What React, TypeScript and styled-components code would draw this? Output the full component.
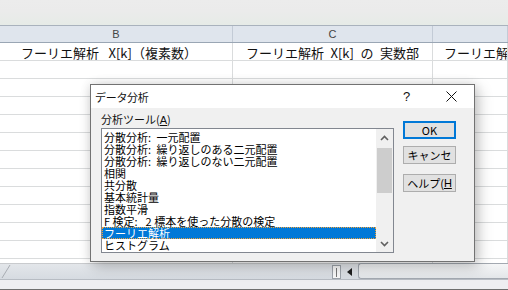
import styled, { createGlobalStyle } from "styled-components"

const GlobalStyle = createGlobalStyle`
  html, body {
    margin: 0;
    padding: 0;
  }
  body {
    width: 508px;
    height: 290px;
    overflow: hidden;
    background: #ffffff;
    font-family: "Noto Sans CJK JP", "Liberation Sans", sans-serif;
  }
`

const columns = "233px 200px 1fr"

const cellTexts = [
  "フーリエ解析\u2002 X[k]（複素数）",
  "フーリエ解析\u2002X[k]\u2002の\u2002実数部",
  "フーリエ解析\u2002X[k]\u2002の\u2002虚数部",
]

const tools = [
  "分散分析:\u2002一元配置",
  "分散分析:\u2002繰り返しのある二元配置",
  "分散分析:\u2002繰り返しのない二元配置",
  "相関",
  "共分散",
  "基本統計量",
  "指数平滑",
  "F 検定:\u2002 2 標本を使った分散の検定",
  "フーリエ解析",
  "ヒストグラム",
]

export default function App() {
  return (
    <>
      <GlobalStyle />
      <Sheet>
        <Ribbon />
        <HeaderRow>
          <HeaderCell>B</HeaderCell>
          <HeaderCell>C</HeaderCell>
          <HeaderCell />
        </HeaderRow>
        <Grid>
          <Row>
            {cellTexts.map((t) => (
              <Cell key={t}>{t}</Cell>
            ))}
          </Row>
          {Array.from({ length: 12 }).map((_, i) => (
            <Row key={i}>
              <Cell />
              <Cell />
              <Cell />
            </Row>
          ))}
        </Grid>
        <StatusArea>
          <TabStrip>
            <TabArea>
              <svg width="12" height="15" viewBox="0 0 12 15">
                <path d="M2 14 L10 1" stroke="#a9adb3" strokeWidth="1" />
              </svg>
            </TabArea>
            <SplitBox>
              <span />
            </SplitBox>
            <ScrollArrow>
              <svg width="6" height="8" viewBox="0 0 6 8">
                <path d="M5 0 L0 4 L5 8 Z" fill="#1f1f1f" />
              </svg>
            </ScrollArrow>
            <HTrack />
          </TabStrip>
          <LowerStrip />
        </StatusArea>

        <Dialog>
          <TitleBar>
            <Title>データ分析</Title>
            <TitleButton>?</TitleButton>
            <TitleButton>
              <svg width="11" height="11" viewBox="0 0 11 11">
                <path d="M0.5 0.5 L10.5 10.5 M10.5 0.5 L0.5 10.5" stroke="#111" strokeWidth="1" />
              </svg>
            </TitleButton>
          </TitleBar>
          <DialogBody>
            <ListColumn>
              <FieldLabel>
                分析ツール(<u>A</u>)
              </FieldLabel>
              <ListBox>
                <Items>
                  {tools.map((t) => (
                    <Item key={t} $selected={t === "フーリエ解析"}>
                      {t}
                    </Item>
                  ))}
                </Items>
                <VScroll>
                  <ScrollButton>
                    <svg width="9" height="6" viewBox="0 0 9 6">
                      <path d="M1 5 L4.5 1.5 L8 5" stroke="#606060" strokeWidth="1.6" fill="none" />
                    </svg>
                  </ScrollButton>
                  <Thumb />
                  <ScrollButton>
                    <svg width="9" height="6" viewBox="0 0 9 6">
                      <path d="M1 1 L4.5 4.5 L8 1" stroke="#606060" strokeWidth="1.6" fill="none" />
                    </svg>
                  </ScrollButton>
                </VScroll>
              </ListBox>
            </ListColumn>
            <ButtonColumn>
              <DialogButton $primary>OK</DialogButton>
              <DialogButton>キャンセ</DialogButton>
              <DialogButton $gap>
                ヘルプ(<u>H</u>
              </DialogButton>
            </ButtonColumn>
          </DialogBody>
        </Dialog>
      </Sheet>
    </>
  )
}

const Sheet = styled.div`
  position: relative;
  width: 508px;
  height: 290px;
  display: flex;
  flex-direction: column;
  overflow: hidden;
`

const Ribbon = styled.div`
  height: 25px;
  flex: none;
  background: linear-gradient(#ececec 0%, #ebebeb 45%, #e6ebe7 100%);
`

const HeaderRow = styled.div`
  flex: none;
  display: grid;
  grid-template-columns: ${columns};
  height: 16px;
  border-top: 1px solid #a9b2bd;
  border-bottom: 1px solid #9aa6b4;
  background: #dfe5ed;
`

const HeaderCell = styled.div`
  border-right: 1px solid #c3cbd6;
  display: flex;
  align-items: center;
  justify-content: center;
  font-family: "Liberation Sans", sans-serif;
  font-size: 11px;
  color: #444;
`

const Grid = styled.div`
  flex: 1;
  overflow: hidden;
`

const Row = styled.div`
  display: grid;
  grid-template-columns: ${columns};
  height: 17px;
  border-bottom: 1px solid #dadcdd;
`

const Cell = styled.div`
  border-right: 1px solid #dadcdd;
  display: flex;
  align-items: center;
  justify-content: center;
  white-space: nowrap;
  overflow: hidden;
  font-size: 13px;
  color: #111;
  line-height: 17px;
  padding-top: 1px;

  &:nth-child(1) {
    padding-right: 14px;
  }
  &:nth-child(3) {
    justify-content: flex-start;
    padding-left: 11px;
  }
`

const StatusArea = styled.div`
  flex: none;
  height: 26px;
  border-top: 1px solid #c9cbce;
  display: flex;
  flex-direction: column;
`

const TabStrip = styled.div`
  height: 15px;
  display: flex;
  align-items: stretch;
  background: linear-gradient(#e3e6ea, #d6dbe1);
  border-bottom: 1px solid #b7bcc3;
`

const TabArea = styled.div`
  flex: 1;
  display: flex;
  align-items: flex-end;
`

const SplitBox = styled.div`
  width: 7px;
  margin: 1px 0 0;
  background: #f8f8f8;
  border: 1px solid #9da3aa;
  display: flex;
  justify-content: center;
  align-items: center;

  span {
    width: 1px;
    height: 9px;
    background: #777;
  }
`

const ScrollArrow = styled.div`
  width: 17px;
  display: flex;
  align-items: center;
  justify-content: center;
`

const HTrack = styled.div`
  width: 149px;
  margin-top: -1px;
  border: 1px solid #a3a9b1;
  border-right: none;
  border-radius: 3px 0 0 3px;
  background: linear-gradient(#f5f6f7, #e3e6e9);
`

const LowerStrip = styled.div`
  flex: 1;
  background: #eeeef1;
  border-bottom: 1px solid #6e6e6e;
`

const Dialog = styled.div`
  position: absolute;
  left: 90px;
  top: 84px;
  width: 385px;
  height: 178px;
  box-sizing: border-box;
  border: 1px solid #727272;
  background: #f0f0f0;
  display: flex;
  flex-direction: column;
  box-shadow: 0 0 10px rgba(0, 0, 0, 0.12), 4px 5px 14px rgba(0, 0, 0, 0.2);
`

const TitleBar = styled.div`
  height: 23px;
  flex: none;
  background: #ffffff;
  display: flex;
  align-items: center;
  padding-left: 4px;
`

const Title = styled.div`
  flex: 1;
  font-size: 11px;
  color: #111;
  letter-spacing: -0.3px;
`

const TitleButton = styled.div`
  width: 45px;
  height: 23px;
  display: flex;
  align-items: center;
  justify-content: center;
  font-family: "Liberation Sans", sans-serif;
  font-size: 13px;
  color: #111;
  &:first-of-type {
    width: 40px;
  }
`

const DialogBody = styled.div`
  flex: 1;
  display: flex;
  padding: 3px 18px 8px 10px;
`

const ListColumn = styled.div`
  width: 294px;
  display: flex;
  flex-direction: column;
`

const FieldLabel = styled.div`
  height: 16px;
  margin-bottom: 1px;
  font-size: 11px;
  line-height: 16px;
  color: #111;

  u {
    font-family: "Liberation Sans", sans-serif;
    text-underline-offset: 1px;
  }
`

const ListBox = styled.div`
  flex: 1;
  display: flex;
  border: 1px solid #828790;
  background: #ffffff;
  overflow: hidden;
`

const Items = styled.div`
  flex: 1;
  padding-top: 2px;
  overflow: hidden;
`

const Item = styled.div<{ $selected?: boolean }>`
  height: 12px;
  line-height: 12px;
  padding-left: 2px;
  font-size: 11px;
  white-space: nowrap;
  color: ${(p) => (p.$selected ? "#ffffff" : "#000000")};
  background: ${(p) => (p.$selected ? "#0078d7" : "transparent")};
  outline: ${(p) => (p.$selected ? "1px dotted #f0a23a" : "none")};
  outline-offset: -1px;
`

const VScroll = styled.div`
  width: 17px;
  background: #f0f0f0;
  display: flex;
  flex-direction: column;
  align-items: center;
`

const ScrollButton = styled.div`
  height: 17px;
  width: 17px;
  display: flex;
  align-items: center;
  justify-content: center;
  &:last-child {
    margin-top: auto;
  }
`

const Thumb = styled.div`
  width: 15px;
  height: 45px;
  margin-top: 2px;
  background: #cdcdcd;
`

const ButtonColumn = styled.div`
  margin-left: 9px;
  padding-top: 10px;
  display: flex;
  flex-direction: column;
  gap: 7px;
`

const DialogButton = styled.div<{ $primary?: boolean; $gap?: boolean }>`
  width: 53px;
  height: 18px;
  box-sizing: border-box;
  margin-top: ${(p) => (p.$gap ? "3px" : "0")};
  border: ${(p) => (p.$primary ? "2px solid #0078d7" : "1px solid #adadad")};
  background: #e1e1e1;
  display: flex;
  align-items: center;
  justify-content: center;
  overflow: hidden;
  white-space: nowrap;
  font-size: 11px;
  color: #000;

  u {
    font-family: "Liberation Sans", sans-serif;
  }
`
